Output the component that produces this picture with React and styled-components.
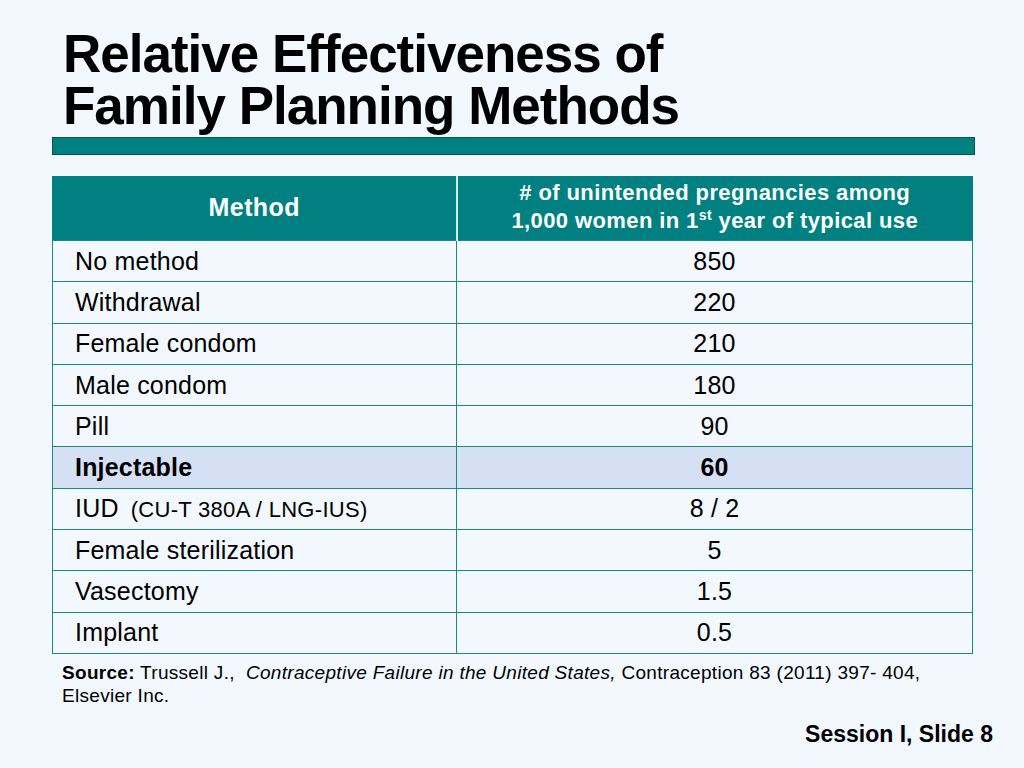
import React from "react";
import styled, { createGlobalStyle } from "styled-components";

const TEAL = "#008080";

const GlobalStyle = createGlobalStyle`
  html, body {
    margin: 0;
    padding: 0;
    background: #f2f8fd;
  }
  body {
    font-family: "Liberation Sans", Arial, sans-serif;
    color: #000;
  }
`;

const Slide = styled.div`
  width: 1024px;
  height: 768px;
  box-sizing: border-box;
  padding: 28px 0 0 52px;
  display: flex;
  flex-direction: column;
  background: #f2f8fd;
`;

const Title = styled.h1`
  margin: 0 0 0 11px;
  font-size: 53px;
  line-height: 52px;
  font-weight: 700;
  letter-spacing: -1px;
`;

const Rule = styled.div`
  width: 923px;
  height: 18px;
  margin-top: 5px;
  background: ${TEAL};
  border: 1px solid #05564f;
  box-sizing: border-box;
`;

const Table = styled.table`
  margin-top: 21px;
  width: 921px;
  border-collapse: collapse;
  table-layout: fixed;
  font-size: 25px;
  letter-spacing: 0.2px;
`;

const HeadCell = styled.th`
  background: ${TEAL};
  color: #fff;
  font-size: ${(p) => p.$size || 22}px;
  font-weight: 700;
  line-height: 28px;
  letter-spacing: 0.4px;
  height: 62px;
  padding: 0 0 2px;
  text-align: center;
  border-left: 1px solid ${TEAL};
  border-right: 2px solid #d8eaea;
  &:last-child {
    border-right: 1px solid ${TEAL};
  }
`;

const Row = styled.tr`
  height: 41.3px;
  background: ${(p) => (p.$highlight ? "#d5e0f5" : "transparent")};
  font-weight: ${(p) => (p.$highlight ? 700 : 400)};
`;

const Cell = styled.td`
  padding: 0 0 0 22px;
  border: 1.5px solid #1a8a84;
  text-align: ${(p) => (p.$center ? "center" : "left")};
  ${(p) => p.$center && "padding: 0;"}
  vertical-align: middle;
  white-space: nowrap;
`;

const Note = styled.span`
  font-size: 22px;
  margin-left: 12px;
  letter-spacing: 0.3px;
`;

const Sup = styled.sup`
  font-size: 14px;
  line-height: 0;
`;

const Source = styled.p`
  margin: 7px 0 0 10px;
  font-size: 19px;
  line-height: 23px;
  letter-spacing: 0.3px;
`;

const Footer = styled.div`
  margin-top: 14px;
  padding-right: 31px;
  text-align: right;
  font-size: 23px;
  font-weight: 700;
`;

const rows = [
  ["No method", "850"],
  ["Withdrawal", "220"],
  ["Female condom", "210"],
  ["Male condom", "180"],
  ["Pill", "90"],
  ["Injectable", "60", true],
  ["IUD", "8 / 2", false, "(CU-T 380A / LNG-IUS)"],
  ["Female sterilization", "5"],
  ["Vasectomy", "1.5"],
  ["Implant", "0.5"],
];

export default function App() {
  return (
    <>
      <GlobalStyle />
      <Slide>
        <Title>
          Relative Effectiveness of
          <br />
          Family Planning Methods
        </Title>
        <Rule />
        <Table>
          <colgroup>
            <col style={{ width: "404px" }} />
            <col />
          </colgroup>
          <thead>
            <tr>
              <HeadCell $size={25}>Method</HeadCell>
              <HeadCell>
                # of unintended pregnancies among
                <br />
                1,000 women in 1<Sup>st</Sup> year of typical use
              </HeadCell>
            </tr>
          </thead>
          <tbody>
            {rows.map(([name, value, hl, note]) => (
              <Row key={name} $highlight={hl}>
                <Cell>
                  {name}
                  {note && <Note>{note}</Note>}
                </Cell>
                <Cell $center>{value}</Cell>
              </Row>
            ))}
          </tbody>
        </Table>
        <Source>
          <b>Source:</b> Trussell J.,&nbsp; <i>Contraceptive Failure in the United States,</i>{" "}
          Contraception 83 (2011) 397- 404,
          <br />
          Elsevier Inc.
        </Source>
        <Footer>Session I, Slide 8</Footer>
      </Slide>
    </>
  );
}
